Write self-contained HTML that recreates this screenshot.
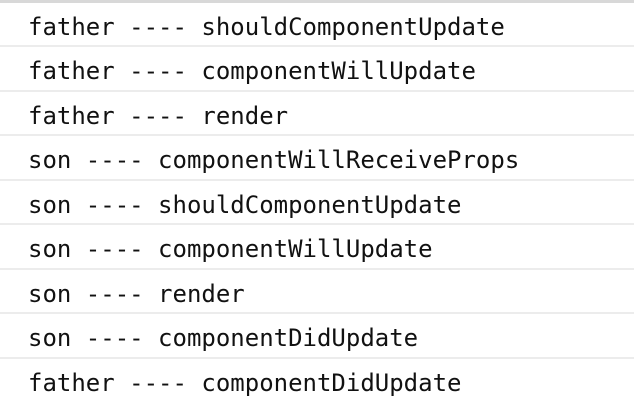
<html><head><style>
body{margin:0;background:#fff;width:634px;height:407px;overflow:hidden}
.r{height:42.5px;border-top:2px solid #ececec;font:24px "DejaVu Sans Mono","Liberation Mono",monospace;color:#111;padding-left:28px;line-height:48px;white-space:pre;overflow:hidden}
.r:first-child{border-top:3px solid #d8d8d8;height:42px}
</style></head><body>
<div class="r">father ---- shouldComponentUpdate</div>
<div class="r">father ---- componentWillUpdate</div>
<div class="r">father ---- render</div>
<div class="r">son ---- componentWillReceiveProps</div>
<div class="r">son ---- shouldComponentUpdate</div>
<div class="r">son ---- componentWillUpdate</div>
<div class="r">son ---- render</div>
<div class="r">son ---- componentDidUpdate</div>
<div class="r">father ---- componentDidUpdate</div>
</body></html>
